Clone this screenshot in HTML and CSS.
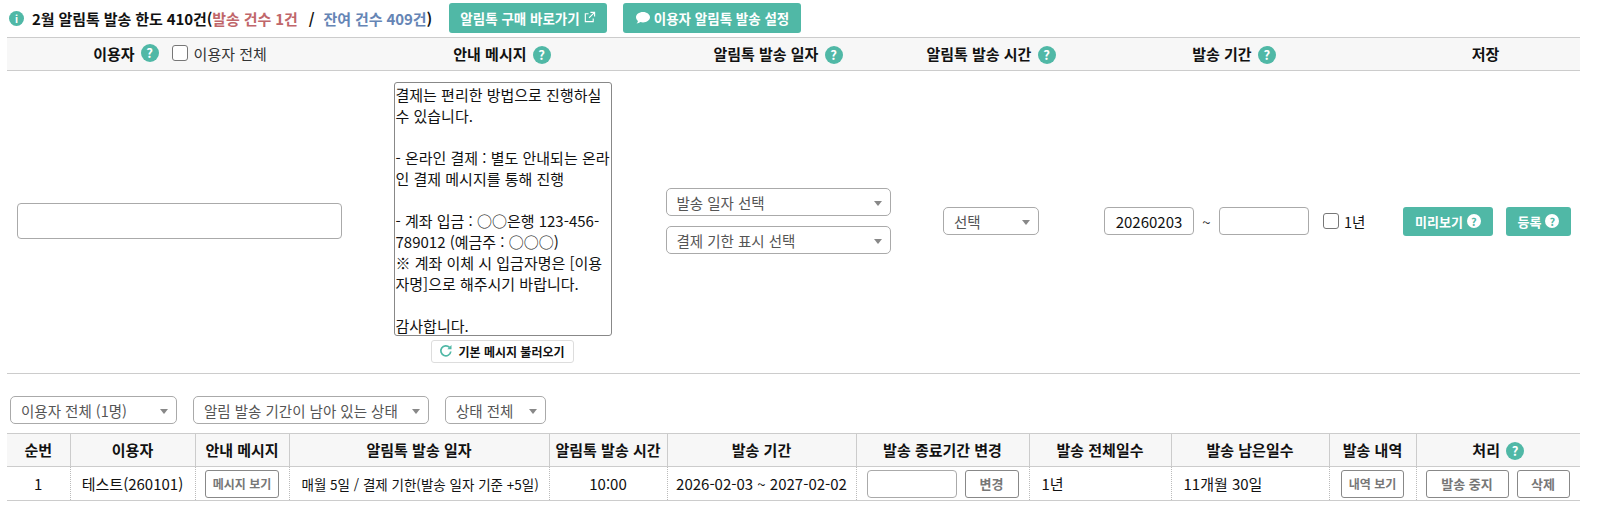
FILE: index.html
```html
<!DOCTYPE html>
<html lang="ko">
<head>
<meta charset="utf-8">
<title>알림톡 발송</title>
<link rel="stylesheet" href="styles.css">
</head>
<body>
<div class="page">
  <div class="topbar">
    <span class="info">i</span>
    <strong class="title">2월 알림톡 발송 한도 410건(<span class="red">발송 건수 1건</span><span class="slash">/</span><span class="blue">잔여 건수 409건</span>)</strong>
    <a class="btn-teal buy">알림톡 구매 바로가기
      <svg class="ico-ext" viewBox="0 0 14 14" width="13" height="13"><path d="M6 3H2.5v8.5H11V8M8 1.5h4.5V6M12.5 1.5L6.5 7.5" fill="none" stroke="#fff" stroke-width="1.2"/></svg>
    </a>
    <a class="btn-teal setup">
      <svg viewBox="0 0 16 14" width="16" height="14"><path d="M8 1C4 1 1 3.3 1 6.3c0 1.5.8 2.800 2 3.700-.2 1-.8 1.900-1.500 2.600 1.500-.1 2.900-.7 3.900-1.500.8.200 1.700.3 2.600.3 4 0 7-2.300 7-5.100S12 1 8 1z" fill="#fff"/></svg>
      이용자 알림톡 발송 설정</a>
  </div>

  <table class="form-table">
    <colgroup><col class="f1"><col class="f2"><col class="f3"><col class="f4"><col class="f5"><col class="f6"></colgroup>
    <thead>
      <tr>
        <th><span class="th-in">이용자 <span class="q">?</span><label class="all"><span class="check"></span>이용자 전체</label></span></th>
        <th>안내 메시지 <span class="q">?</span></th>
        <th>알림톡 발송 일자 <span class="q">?</span></th>
        <th>알림톡 발송 시간 <span class="q">?</span></th>
        <th>발송 기간 <span class="q">?</span></th>
        <th>저장</th>
      </tr>
    </thead>
    <tbody>
      <tr>
        <td><input class="text user-input" type="text"></td>
        <td>
          <div class="msg-cell">
            <textarea class="msg" readonly>결제는 편리한 방법으로 진행하실 수 있습니다.

- 온라인 결제 : 별도 안내되는 온라인 결제 메시지를 통해 진행

- 계좌 입금 : ○○은행 123-456-789012 (예금주 : ○○○)
※ 계좌 이체 시 입금자명은 [이용자명]으로 해주시기 바랍니다.

감사합니다.</textarea>
            <a class="btn-load">
              <svg viewBox="0 0 14 14" width="14" height="14"><path d="M11.800 7.500A5 5 0 1 1 10.500 3.400" fill="none" stroke="#50b8a6" stroke-width="1.700"/><path d="M12.500 1v4.200H8.300z" fill="#50b8a6"/></svg>
              기본 메시지 불러오기</a>
          </div>
        </td>
        <td>
          <div class="sel-stack">
            <div class="sel w-date"><span>발송 일자 선택</span></div>
            <div class="sel w-date"><span>결제 기한 표시 선택</span></div>
          </div>
        </td>
        <td class="center"><div class="sel w-time"><span>선택</span></div></td>
        <td>
          <div class="period">
            <input class="text date" type="text" value="20260203">
            <span class="tilde">~</span>
            <input class="text date" type="text">
            <label class="year"><span class="check"></span>1년</label>
          </div>
        </td>
        <td>
          <div class="save">
            <a class="btn-teal small">미리보기 <span class="q inv">?</span></a>
            <a class="btn-teal small">등록 <span class="q inv">?</span></a>
          </div>
        </td>
      </tr>
    </tbody>
  </table>

  <div class="filters">
    <div class="sel w-f1"><span>이용자 전체 (1명)</span></div>
    <div class="sel w-f2"><span>알림 발송 기간이 남아 있는 상태</span></div>
    <div class="sel w-f3"><span>상태 전체</span></div>
  </div>

  <table class="list">
    <colgroup><col class="c1"><col class="c2"><col class="c3"><col class="c4"><col class="c5"><col class="c6"><col class="c7"><col class="c8"><col class="c9"><col class="c10"><col class="c11"></colgroup>
    <thead>
      <tr>
        <th>순번</th><th>이용자</th><th>안내 메시지</th><th>알림톡 발송 일자</th><th>알림톡 발송 시간</th><th>발송 기간</th><th>발송 종료기간 변경</th><th>발송 전체일수</th><th>발송 남은일수</th><th>발송 내역</th><th>처리 <span class="q">?</span></th>
      </tr>
    </thead>
    <tbody>
      <tr>
        <td class="center">1</td>
        <td class="center">테스트(260101)</td>
        <td class="center"><a class="btn-line tiny">메시지 보기</a></td>
        <td class="left narrow">매월 5일 / 결제 기한(발송 일자 기준 +5일)</td>
        <td class="center">10:00</td>
        <td class="center">2026-02-03 ~ 2027-02-02</td>
        <td><div class="rowflex"><input class="text end" type="text"><a class="btn-line w-change">변경</a></div></td>
        <td class="left">1년</td>
        <td class="left">11개월 30일</td>
        <td class="center"><a class="btn-line tiny w-log">내역 보기</a></td>
        <td><div class="rowflex stop-row"><a class="btn-line w-stop">발송 중지</a><a class="btn-line w-del">삭제</a></div></td>
      </tr>
    </tbody>
  </table>
</div>
</body>
</html>
```

FILE: styles.css
```css
* { box-sizing: border-box; }
html, body { margin: 0; padding: 0; background: #fff; }
body {
  font-family: "Noto Sans CJK KR", "Noto Sans", sans-serif;
  font-size: 15px;
  color: #111;
}
.page { width: 1580px; padding-left: 7px; }

.topbar { display: flex; align-items: center; height: 37px; padding: 0 0 1px 2px; }
.info {
  width: 15px; height: 15px; border-radius: 50%; background: #50b8a6; color: #fff;
  font-size: 10px; font-weight: 700; line-height: 15px; text-align: center; flex: none;
}
.title { margin-left: 8px; font-size: 15px; font-weight: 700; white-space: nowrap; letter-spacing: -0.1px; }
.red { color: #c0666a; }
.blue { color: #6585b5; }
.slash { margin: 0 9px 0 11px; color: #111; }
.btn-teal {
  display: inline-flex; align-items: center; justify-content: center; gap: 3px;
  background: #50b8a6; color: #fff; border-radius: 3px; font-weight: 700; font-size: 13px;
  white-space: nowrap;
}
.buy { margin-left: 17px; width: 158px; height: 30px; font-size: 13.5px; padding-bottom: 1px; }
.setup { margin-left: 16px; width: 178px; height: 30px; font-size: 13.5px; padding-bottom: 1px; }

table { border-collapse: collapse; table-layout: fixed; width: 1573px; }
th { background: #f7f7f7; font-weight: 700; font-size: 15px; border-top: 1px solid #ccc; border-bottom: 1px solid #ccc; padding: 0 0 2px; white-space: nowrap; }
.q {
  display: inline-block; width: 18px; height: 18px; border-radius: 50%; background: #50b8a6; color: #fff;
  font-size: 13px; font-weight: 700; line-height: 18px; text-align: center; vertical-align: 0; margin-left: 2px;
}
.q.inv { background: #fff; color: #50b8a6; width: 14px; height: 14px; line-height: 14px; font-size: 11px; margin-left: 1px; vertical-align: 1px; }

.form-table th { height: 33px; }
.form-table tbody td { height: 303px; border-bottom: 1px solid #ccc; padding: 0 0 2px; vertical-align: middle; }
.f1 { width: 346px; } .f2 { width: 298px; } .f3 { width: 254px; } .f4 { width: 172px; } .f5 { width: 314px; } .f6 { width: 189px; }
.th-in { display: inline-flex; align-items: center; gap: 4px; }
.all { display: inline-flex; align-items: center; gap: 6px; margin-left: 9px; font-weight: 400; font-size: 15px; color: #333; }
.check { display: inline-block; width: 16px; height: 16px; border: 1.5px solid #777; border-radius: 3px; background: #fff; flex: none; }

.text { border: 1px solid #aaa; border-radius: 4px; background: #fff; font: inherit; color: #111; padding: 0 10px; outline: none; }
.user-input { display: block; width: 325px; height: 36px; margin-left: 10px; }

.msg-cell { display: flex; flex-direction: column; align-items: center; gap: 4px; margin-top: 2px; }
.msg {
  display: block; width: 218px; height: 254px; border: 1px solid #888; border-radius: 3px; padding: 1px 0 0 1px; resize: none;
  overflow: hidden; font: inherit; font-size: 15px; line-height: 21px; color: #111; outline: none; margin-left: 1px;
}
.btn-load {
  display: inline-flex; align-items: center; justify-content: center; gap: 5px; width: 143px; height: 23px;
  border: 1px solid #ddd; border-radius: 3px; font-size: 12px; font-weight: 700; background: #fff;
}

.sel {
  display: flex; align-items: center; justify-content: space-between; height: 28px; padding: 0 8px 0 10px;
  border: 1px solid #aaa; border-radius: 5px; background: #fff; font-size: 14.5px; color: #555; white-space: nowrap;
}
.sel::after { content: ""; border-left: 4px solid transparent; border-right: 4px solid transparent; border-top: 5px solid #888; margin-top: 3px; flex: none; margin-left: 6px; }
.sel-stack { display: flex; flex-direction: column; gap: 10px; align-items: center; }
.w-date { width: 225px; }
.w-time { width: 96px; margin: 0 auto; }
.center { text-align: center; }
.left { text-align: left; padding-left: 12px !important; }

.period { display: flex; align-items: center; margin-left: 27px; }
.date { width: 90px; height: 28px; }
.date:first-child { text-align: center; padding: 0 4px; }
.tilde { width: 25px; text-align: center; color: #333; font-size: 15px; }
.year { display: inline-flex; align-items: center; gap: 5px; margin-left: 14px; font-size: 14.5px; }
.save { display: flex; justify-content: flex-start; gap: 13px; margin-left: 12px; }
.small { height: 29px; font-size: 13px; padding: 0; }
.small:first-child { width: 90px; }
.small:last-child { width: 65px; }

.filters { display: flex; align-items: center; height: 28px; margin: 22px 0 9px 3px; gap: 16px; }
.filters .sel { color: #555; font-size: 14.5px; }
.w-f1 { width: 167px; } .w-f2 { width: 236px; } .w-f3 { width: 101px; }
.w-f2 span, .w-f3 span { flex: none; }

.list th { height: 33px; border-left: 1px solid #ccc; border-right: 1px solid #ccc; }
.list th:first-child { border-left: 0; }
.list th:last-child { border-right: 0; }
.list td { height: 34px; padding: 0; font-size: 15px; border-left: 1px dotted #bbb; border-right: 1px dotted #bbb; border-bottom: 1px solid #ccc; white-space: nowrap; }
.list td:first-child { border-left: 0; }
.list td:last-child { border-right: 0; }
.list td.narrow { font-size: 13.5px; }
.c1 { width: 63px; } .c2 { width: 125px; } .c3 { width: 94px; } .c4 { width: 260px; } .c5 { width: 118px; } .c6 { width: 189px; } .c7 { width: 173px; } .c8 { width: 142px; } .c9 { width: 158px; } .c10 { width: 87px; } .c11 { width: 164px; }
.btn-line {
  display: inline-flex; align-items: center; justify-content: center; height: 28px; border: 1px solid #888; border-radius: 3px;
  font-size: 13px; font-weight: 700; color: #777; background: #fff; white-space: nowrap; vertical-align: middle;
}
.tiny { width: 74px; font-size: 12px; }
.w-log { width: 63px; }
.rowflex { display: flex; align-items: center; gap: 8px; padding-left: 10px; }
.stop-row { padding-left: 9px; }
.end { width: 90px; height: 28px; }
.w-change { width: 54px; }
.w-stop { width: 83px; }
.w-del { width: 53px; }
```
